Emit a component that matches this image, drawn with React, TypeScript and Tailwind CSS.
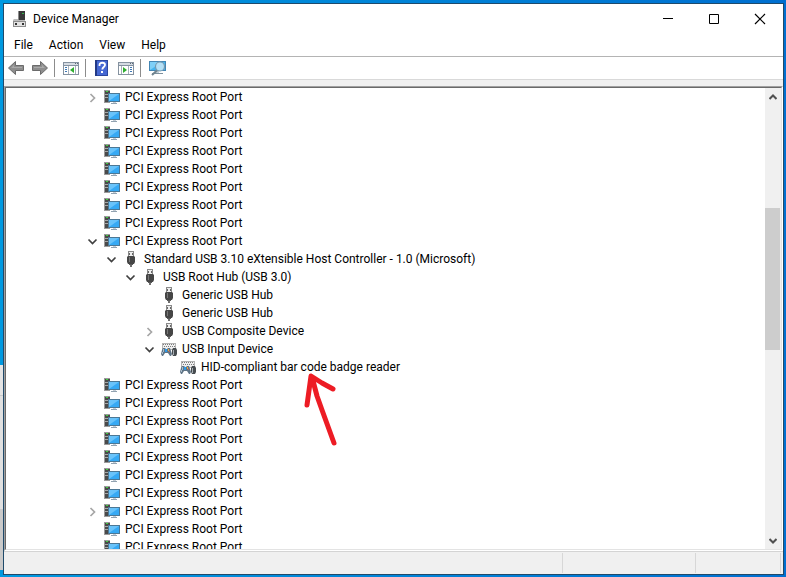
import type { ReactNode } from 'react';

type DeviceIconName = 'computer' | 'usb' | 'input';

type DeviceNode = {
  id: string;
  name: string;
  icon: DeviceIconName;
  state?: 'open' | 'closed';
  children?: DeviceNode[];
};

const rootPort = (id: string, state?: 'closed'): DeviceNode => ({
  id,
  name: 'PCI Express Root Port',
  icon: 'computer',
  state,
});

const devices: DeviceNode[] = [
  rootPort('p1', 'closed'),
  rootPort('p2'),
  rootPort('p3'),
  rootPort('p4'),
  rootPort('p5'),
  rootPort('p6'),
  rootPort('p7'),
  rootPort('p8'),
  {
    id: 'p9',
    name: 'PCI Express Root Port',
    icon: 'computer',
    state: 'open',
    children: [
      {
        id: 'host',
        name: 'Standard USB 3.10 eXtensible Host Controller - 1.0 (Microsoft)',
        icon: 'usb',
        state: 'open',
        children: [
          {
            id: 'hub',
            name: 'USB Root Hub (USB 3.0)',
            icon: 'usb',
            state: 'open',
            children: [
              { id: 'g1', name: 'Generic USB Hub', icon: 'usb' },
              { id: 'g2', name: 'Generic USB Hub', icon: 'usb' },
              {
                id: 'composite',
                name: 'USB Composite Device',
                icon: 'usb',
                state: 'closed',
              },
              {
                id: 'usb-input',
                name: 'USB Input Device',
                icon: 'input',
                state: 'open',
                children: [
                  {
                    id: 'reader',
                    name: 'HID-compliant bar code badge reader',
                    icon: 'input',
                  },
                ],
              },
            ],
          },
        ],
      },
    ],
  },
  rootPort('p10'),
  rootPort('p11'),
  rootPort('p12'),
  rootPort('p13'),
  rootPort('p14'),
  rootPort('p15'),
  rootPort('p16'),
  rootPort('p17', 'closed'),
  rootPort('p18'),
  rootPort('p19'),
];

function ComputerIcon() {
  return (
    <svg className="size-4 shrink-0" viewBox="0 0 16 16" aria-hidden="true">
      <path d="M0 1h6v13H0z" fill="#9b9b9b" />
      <path d="M1 2h5v11H1z" fill="#4a4a4a" />
      <path d="M2 2h2v1H2z" fill="#3fd33f" />
      <path d="M1 5h5v1H1zM1 8h4v1H1z" fill="#a8a8a8" />
      <path d="M4 4h12v9H4z" fill="#4b7896" />
      <path d="M5 5h10v7H5z" fill="#36a9f4" />
      <path d="M5 12V5h10z" fill="#69c3fa" />
      <path d="M9 13h3v1H9z" fill="#c5ced6" />
      <path d="M7 14h6v1H7z" fill="#93a3b1" />
    </svg>
  );
}

function UsbIcon() {
  return (
    <svg className="size-4 shrink-0" viewBox="0 0 16 16" aria-hidden="true">
      <path d="M5 0h6v6H5z" fill="#8a8a8a" />
      <path d="M6 1h4v5H6z" fill="#ededed" />
      <path d="M6 2h1v2H6zM9 2h1v2H9z" fill="#666" />
      <path d="M5 5h6l1 1v5l-1 2H5l-1-2V6z" fill="#464646" />
      <path d="M6 6h1v5H6z" fill="#777" />
      <path d="M6 13h4v1H6z" fill="#5a5a5a" />
      <path d="M7 14h2v2H7z" fill="#6f6f6f" />
    </svg>
  );
}

function InputIcon() {
  return (
    <svg className="size-4 shrink-0" viewBox="0 0 16 16" aria-hidden="true">
      <path d="M1 2h14v7H1z" fill="#b4b4b4" />
      <path d="M2 3h12v5H2z" fill="#efefef" />
      <path
        d="M2 3h1v1H2zM4 3h1v1H4zM6 3h1v1H6zM8 3h1v1H8zM10 3h1v1h-1zM12 3h1v1h-1zM3 5h1v1H3zM5 5h1v1H5zM7 5h1v1H7zM9 5h1v1H9zM11 5h1v1h-1zM13 5h1v1h-1z"
        fill="#7d7d7d"
      />
      <path
        d="M2 7h2l1 1h1l1-1h2l1 3 1 3-1 2H9l-2-3H4l-2 3H1l-1-2 1-4z"
        fill="#5f7486"
      />
      <path d="M2 8h1v3H2zM1 11h1v2H1z" fill="#a9bccb" />
      <path d="M4 8h2v3H4z" fill="#2f9ae6" />
      <path d="M7 8h1v2H7z" fill="#f0a63a" />
      <path d="M8 10h1v1H8z" fill="#d2604a" />
      <path d="M12 7h3l1 2v4l-1 2h-3l-1-2V9z" fill="#474c50" />
      <path d="M12 9h1v5h-1z" fill="#a5adb3" />
    </svg>
  );
}

function DeviceIcon({ name }: { name: DeviceIconName }) {
  if (name === 'computer') return <ComputerIcon />;
  if (name === 'usb') return <UsbIcon />;
  return <InputIcon />;
}

function Expander({ open }: { open: boolean }) {
  return (
    <button
      type="button"
      className="grid size-4 shrink-0 place-items-center"
      aria-label={open ? 'Collapse' : 'Expand'}
    >
      <svg className="size-4" viewBox="0 0 16 16" fill="none">
        {open ? (
          <path d="M3.500 6.500l4 4 4-4" stroke="#404040" strokeWidth="1.700" />
        ) : (
          <path d="M5.500 5l4 4-4 4" stroke="#a6a6a6" strokeWidth="1.700" />
        )}
      </svg>
    </button>
  );
}

function DeviceItem({ node }: { node: DeviceNode }) {
  return (
    <li>
      <div className="flex h-[18px] items-center gap-[3px]">
        {node.state ? (
          <Expander open={node.state === 'open'} />
        ) : (
          <span className="w-4 shrink-0" />
        )}
        <DeviceIcon name={node.icon} />
        <span className="pl-0.5 whitespace-nowrap">{node.name}</span>
      </div>
      {node.children && (
        <ul className="pl-[19px]">
          {node.children.map((child) => (
            <DeviceItem key={child.id} node={child} />
          ))}
        </ul>
      )}
    </li>
  );
}

function ToolButton({
  label,
  children,
}: {
  label: string;
  children: ReactNode;
}) {
  return (
    <button
      type="button"
      aria-label={label}
      className="grid h-[22px] w-6 place-items-center"
    >
      {children}
    </button>
  );
}

function Separator() {
  return <div className="mr-1 ml-0.5 h-[18px] w-px bg-[#8c8c8c]" />;
}

function ArrowIcon({ forward }: { forward?: boolean }) {
  return (
    <svg className="size-4" viewBox="0 0 16 16">
      <path
        d={
          forward
            ? 'M.5 5.500h8V1.500L15.500 8l-7 6.500v-4h-8z'
            : 'M15.500 5.500h-8V1.500L.5 8l7 6.500v-4h8z'
        }
        fill="#8e8e8e"
        stroke="#6b6b6b"
      />
      <path
        d={forward ? 'M2 7h8V5l3 3H2z' : 'M14 7H6V5L3 8h11z'}
        fill="#aaa"
      />
    </svg>
  );
}

function PaneIcon({ right }: { right?: boolean }) {
  return (
    <svg className="size-4" viewBox="0 0 16 16">
      <path d="M0 2h16v13H0z" fill="#8592a0" />
      <path d="M1 3h14v2H1z" fill="#d5dbe2" />
      <path d="M12 3h1v1h-1zM14 3h1v1h-1z" fill="#5e6b78" />
      <path d="M1 6h14v8H1z" fill="#fff" />
      {right ? (
        <>
          <path d="M10 6h1v8h-1zM3 6h1v8H3z" fill="#a7b1bb" />
          <path d="M12 7h2v1h-2zM12 9h2v1h-2zM12 11h2v1h-2z" fill="#3f78b4" />
          <path d="M5 7l4 3-4 3z" fill="#2fad2f" />
        </>
      ) : (
        <>
          <path d="M5 6h1v8H5zM12 6h1v8h-1z" fill="#a7b1bb" />
          <path d="M2 7h2v1H2zM2 9h2v1H2zM2 11h2v1H2z" fill="#3f78b4" />
          <path d="M11 7l-4 3 4 3z" fill="#2fad2f" />
        </>
      )}
    </svg>
  );
}

function HelpIcon() {
  return (
    <svg className="size-4" viewBox="0 0 16 16" fill="none">
      <path d="M1 0h13v16H1z" fill="#2c479f" />
      <path d="M3 1h10v14H3z" fill="#4668d3" />
      <path d="M1 0h2v16H1z" fill="#233a86" />
      <path
        d="M5.500 6V5c0-3 5.500-3 5.500 0 0 2-2.700 2-2.700 4.500"
        stroke="#fff"
        strokeWidth="1.800"
      />
      <path d="M7 11h2v2H7z" fill="#fff" />
    </svg>
  );
}

function ScanIcon() {
  return (
    <svg className="h-4 w-[17px]" viewBox="0 0 17 16" fill="none">
      <path d="M0 1h17v10H0z" fill="#4386b4" />
      <path d="M1 2h15v8H1z" fill="#45b4ee" />
      <path d="M1 10V2h12z" fill="#7fd0f7" />
      <path d="M6 11h4v2H6z" fill="#c3ced5" />
      <path d="M3 13h11v1H3z" fill="#7c909d" />
      <path d="M8.500 10L3 15" stroke="#71848f" strokeWidth="2" />
      <circle
        cx="11"
        cy="6.500"
        r="4.500"
        fill="#b4e0f6"
        stroke="#7799ae"
        strokeWidth="1.200"
      />
    </svg>
  );
}

function AppIcon() {
  return (
    <svg className="size-4" viewBox="0 0 16 16" aria-hidden="true">
      <path d="M6 0h7v10H6z" fill="#8d8d8d" />
      <path d="M7 0h6v9H7z" fill="#383838" />
      <path d="M10 2h2v1h-2z" fill="#31b54a" />
      <path d="M2 8h4v1h7v1h1v1H1V9z" fill="#bdbdbd" />
      <path d="M1 10h13v6H1z" fill="#8d8d8d" />
      <path d="M2 11h11v4H2z" fill="#e3e3e3" />
      <path d="M3 12h2v2H3zM10 12h2v2h-2z" fill="#333" />
    </svg>
  );
}

function TitleBar() {
  return (
    <header className="flex h-[30px] items-center">
      <div className="flex flex-1 items-center gap-[5px] pl-2">
        <AppIcon />
        <h1>Device Manager</h1>
      </div>
      <button
        type="button"
        aria-label="Minimize"
        className="grid h-full w-[46px] place-items-center"
      >
        <svg className="size-3" viewBox="0 0 12 12">
          <path d="M1 5h10v1H1z" />
        </svg>
      </button>
      <button
        type="button"
        aria-label="Maximize"
        className="grid h-full w-[46px] place-items-center"
      >
        <svg className="size-3" viewBox="0 0 12 12" fill="none" stroke="#000">
          <path d="M1.500 1.500h9v9h-9z" />
        </svg>
      </button>
      <button
        type="button"
        aria-label="Close"
        className="grid h-full w-[46px] place-items-center"
      >
        <svg className="size-3" viewBox="0 0 12 12" fill="none" stroke="#000">
          <path d="M1 1l10 10M11 1L1 11" strokeWidth="1.200" />
        </svg>
      </button>
    </header>
  );
}

function ScrollBar() {
  return (
    <div className="flex w-4 shrink-0 flex-col bg-[#f0f0f0]">
      <button
        type="button"
        aria-label="Scroll up"
        className="grid h-[17px] w-[15px] place-items-center"
      >
        <svg className="size-2" viewBox="0 0 8 8" fill="none">
          <path d="M.5 6L4 2.500 7.500 6" stroke="#505050" strokeWidth="2" />
        </svg>
      </button>
      <div className="flex flex-1 flex-col">
        <div className="flex-[103]" />
        <div className="w-[15px] flex-[142] bg-[#cdcdcd]" />
        <div className="flex-[182]" />
      </div>
      <button
        type="button"
        aria-label="Scroll down"
        className="grid h-[17px] w-[15px] place-items-center"
      >
        <svg className="size-2" viewBox="0 0 8 8" fill="none">
          <path d="M.5 2L4 5.500 7.500 2" stroke="#505050" strokeWidth="2" />
        </svg>
      </button>
    </div>
  );
}

function PointerArrow() {
  return (
    <svg
      className="pointer-events-none absolute top-[284px] left-[296px] h-[76px] w-[38px]"
      viewBox="0 0 38 76"
      fill="none"
      stroke="#ed1c24"
      strokeWidth="5"
      strokeLinecap="round"
      strokeLinejoin="round"
      aria-hidden="true"
    >
      <path d="M5 33L9 4l11 7 11 6M10 5l5 19 5 14 12 33" />
    </svg>
  );
}

export default function App() {
  return (
    <div className="flex h-screen bg-linear-to-r from-[#0099e0] to-[#006fd0] pr-[2px] font-[Roboto,sans-serif] text-[12px] leading-[18px] text-black">
      {/* edge of the window behind */}
      <div className="flex w-[3px] shrink-0 flex-col">
        <div className="flex-[366]" />
        <div className="flex-[30] border-b border-[#c9c9c9] bg-[#e4e4e4]" />
        <div className="flex-[113] bg-[#e0e0e0]" />
        <div className="flex-[61] bg-[#cacaca]" />
        <div className="flex-[7]" />
      </div>

      <main className="mt-[3px] mb-[2px] flex min-w-0 flex-1 flex-col border border-[#1f4a6b] bg-white">
        <TitleBar />

        <nav className="flex h-[23px] items-center gap-4 border-b border-[#b4b4b4] pl-[10px]">
          <button type="button">File</button>
          <button type="button">Action</button>
          <button type="button">View</button>
          <button type="button">Help</button>
        </nav>

        <div className="flex h-[23px] items-center border-b border-[#d9d9d9]">
          <ToolButton label="Back">
            <ArrowIcon />
          </ToolButton>
          <ToolButton label="Forward">
            <ArrowIcon forward />
          </ToolButton>
          <Separator />
          <ToolButton label="Show/Hide Console Tree">
            <PaneIcon />
          </ToolButton>
          <Separator />
          <ToolButton label="Help">
            <HelpIcon />
          </ToolButton>
          <ToolButton label="Show/Hide Action Pane">
            <PaneIcon right />
          </ToolButton>
          <Separator />
          <ToolButton label="Scan for hardware changes">
            <ScanIcon />
          </ToolButton>
        </div>

        <div className="flex min-h-0 flex-1 flex-col bg-[#f0f0f0] pt-1.5">
          <div className="flex min-h-0 flex-1 border border-t-[#a0a0a0] border-r-white border-b-white border-l-[#a0a0a0]">
            <div className="relative flex min-w-0 flex-1 overflow-hidden border border-t-[#696969] border-r-[#e3e3e3] border-b-[#e3e3e3] border-l-[#696969] bg-white">
              <ul className="min-w-0 flex-1 pl-[79px]">
                {devices.map((node) => (
                  <DeviceItem key={node.id} node={node} />
                ))}
              </ul>
              <ScrollBar />
              <PointerArrow />
            </div>
          </div>
        </div>

        <footer className="flex h-[23px] shrink-0 border-t border-[#d4d4d4] bg-[#f0f0f0] pt-px pb-px">
          <div className="flex-1 border-r border-[#d7d7d7]" />
          <div className="w-[133px] border-r border-[#d7d7d7]" />
          <div className="mr-0.5 w-[85px] border-r border-[#d7d7d7]" />
        </footer>
      </main>
    </div>
  );
}
